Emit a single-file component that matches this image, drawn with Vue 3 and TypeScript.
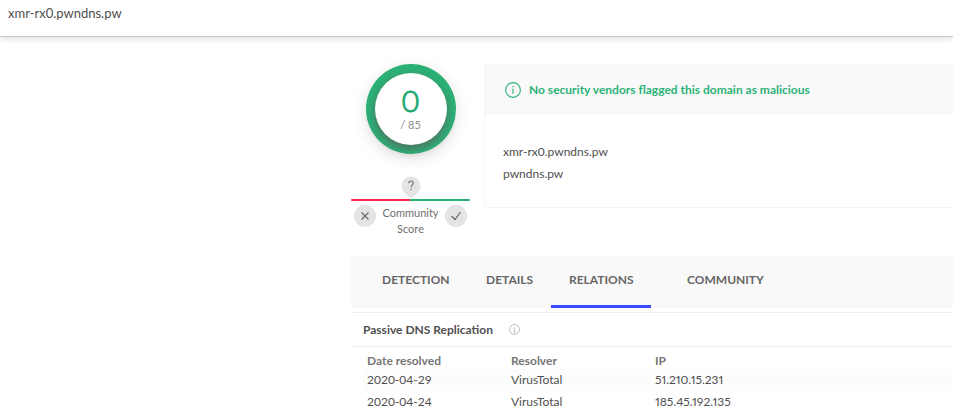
<script setup lang="ts">
interface Resolution {
  date: string
  resolver: string
  ip: string
}

const domain = 'xmr-rx0.pwndns.pw'
const parentDomain = 'pwndns.pw'
const tabs: string[] = ['DETECTION', 'DETAILS', 'RELATIONS', 'COMMUNITY']
const activeTab = 'RELATIONS'
const resolutions: Resolution[] = [
  { date: '2020-04-29', resolver: 'VirusTotal', ip: '51.210.15.231' },
  { date: '2020-04-24', resolver: 'VirusTotal', ip: '185.45.192.135' },
]
</script>

<template>
  <div class="page">
    <header class="topbar">{{ domain }}</header>
    <main class="content">
      <section class="summary">
        <div class="score">
          <div class="gauge">
            <div class="gauge-inner">
              <span class="positives">0</span>
              <span class="total">/ 85</span>
            </div>
          </div>
          <svg class="pin" viewBox="0 0 20 23" aria-hidden="true">
            <path d="M10 .5A9.500 9.500 0 0 1 19.500 10c0 5-4.500 8.500-9.500 12.500C5 18.500.5 15 .5 10A9.500 9.500 0 0 1 10 .5z" fill="#e4e4e4" />
            <path d="M7.700 7.300c.1-1.500 1-2.300 2.300-2.300s2.300.8 2.300 2.100c0 1.800-2.200 1.900-2.200 4.200M10.100 12.700v1.400" fill="none" stroke="#757575" stroke-width="1.200" />
          </svg>
          <div class="scale"></div>
          <div class="votes">
            <button type="button" class="vote" aria-label="Malicious">
              <svg viewBox="0 0 22 22"><path d="M7.500 7.500l7 7M14.500 7.500l-7 7" /></svg>
            </button>
            <span class="caption">Community Score</span>
            <button type="button" class="vote" aria-label="Harmless">
              <svg viewBox="0 0 22 22"><path d="M6.500 11l3.500 3.500 5.500-7.500" /></svg>
            </button>
          </div>
        </div>
        <div class="card">
          <div class="verdict">
            <svg class="info" viewBox="0 0 16 16" aria-hidden="true">
              <circle cx="8" cy="8" r="7.400" />
              <path d="M8 6.500v5.500M8 4v1.200" />
            </svg>
            <span>No security vendors flagged this domain as malicious</span>
          </div>
          <div class="names">
            <a href="#">{{ domain }}</a>
            <a href="#">{{ parentDomain }}</a>
          </div>
        </div>
      </section>

      <nav class="tabs">
        <a
          v-for="tab in tabs"
          :key="tab"
          href="#"
          class="tab"
          :class="{ active: tab === activeTab }"
        >{{ tab }}</a>
      </nav>

      <section class="relations">
        <h2 class="heading">
          Passive DNS Replication
          <svg class="info-small" viewBox="0 0 16 16" aria-hidden="true">
            <circle cx="8" cy="8" r="7.200" />
            <path d="M6.500 7H8v5M6.500 12h3M8 4v1.300" />
          </svg>
        </h2>
        <table class="records">
          <thead>
            <tr>
              <th scope="col">Date resolved</th>
              <th scope="col">Resolver</th>
              <th scope="col">IP</th>
            </tr>
          </thead>
          <tbody>
            <tr v-for="row in resolutions" :key="row.date">
              <td>{{ row.date }}</td>
              <td>{{ row.resolver }}</td>
              <td class="ip">{{ row.ip }}</td>
            </tr>
          </tbody>
        </table>
      </section>
    </main>
  </div>
</template>

<style>
body {
  background: #fff;
}
</style>

<style scoped>
.page {
  font-family: Lato, "Open Sans", sans-serif;
  font-size: 12px;
  line-height: 16px;
  color: #505050;
}
.page * {
  box-sizing: border-box;
}
a {
  color: inherit;
  text-decoration: none;
}
.topbar {
  padding: 5px 8px 15px;
  font-size: 13px;
  border-bottom: 1px solid #c6c6c6;
  box-shadow: 0 2px 6px rgba(0, 0, 0, 0.12);
}
.content {
  margin-left: 351px;
  padding-top: 27px;
}
.summary {
  display: flex;
  align-items: flex-start;
  gap: 14px;
}
.score {
  flex: none;
  width: 119px;
  display: flex;
  flex-direction: column;
  align-items: center;
}
.gauge {
  width: 90px;
  height: 90px;
  padding: 9px;
  border-radius: 50%;
  background: #2bb176;
  box-shadow: 0 4px 16px rgba(0, 0, 0, 0.12);
}
.gauge-inner {
  height: 72px;
  border-radius: 50%;
  background: #fff;
  box-shadow: 0 4px 10px rgba(95, 80, 85, 0.7);
  display: flex;
  flex-direction: column;
  align-items: center;
  padding-top: 9px;
}
.positives {
  font-size: 30px;
  font-weight: 300;
  line-height: 36px;
  color: #22a971;
  -webkit-text-stroke: 1px #22a971;
}
.total {
  font-size: 11px;
  line-height: 14px;
  color: #8d8d8d;
}
.pin {
  width: 20px;
  height: 23px;
  margin-top: 22px;
}
.scale {
  width: 100%;
  height: 2px;
  border-radius: 1px;
  background: linear-gradient(90deg, #ff264f 50%, #28b374 50%);
}
.votes {
  width: 100%;
  display: flex;
  justify-content: space-between;
  padding: 4px 3px 0;
}
.vote {
  flex: none;
  width: 22px;
  height: 22px;
  padding: 0;
  border: 0;
  border-radius: 50%;
  background: #e4e4e4;
}
.vote svg {
  display: block;
  fill: none;
  stroke: #666;
  stroke-width: 1.2;
}
.caption {
  font-size: 11px;
  text-align: center;
  color: #6f6f6f;
}
.card {
  flex: 1;
  border-left: 1px solid #f5f5f5;
  border-bottom: 1px solid #f5f5f5;
}
.verdict {
  display: flex;
  align-items: center;
  gap: 8px;
  height: 51px;
  padding: 0 20px;
  background: #f9f9f9;
  color: #2bb277;
  font-weight: 700;
}
.info {
  width: 16px;
  height: 16px;
  fill: none;
  stroke: #2bb277;
  stroke-width: 1.1;
}
.names {
  display: flex;
  flex-direction: column;
  gap: 6px;
  padding: 29px 18px 25px;
}
.tabs {
  display: grid;
  grid-template-columns: 104px 83px 100px auto;
  justify-content: start;
  margin-top: 19px;
  padding-left: 13px;
  background: #f9f9f9;
}
.tab {
  height: 52px;
  padding: 16px 18px 0;
  font-weight: 700;
  color: #666;
}
.tab:last-child {
  margin-left: 18px;
}
.tab.active {
  border-bottom: 3px solid #3b4bff;
}
.relations {
  margin-top: 4px;
  border-top: 1px solid #eee;
}
.heading {
  display: flex;
  align-items: center;
  gap: 16px;
  height: 34px;
  margin: 0;
  padding-left: 12px;
  border-bottom: 1px solid #eee;
  font-size: 12px;
  font-weight: 700;
}
.info-small {
  width: 11px;
  height: 11px;
  fill: none;
  stroke: #b8b8b8;
  stroke-width: 1.4;
}
.records {
  width: calc(100% - 12px);
  margin: 6px 0 0 12px;
  border-collapse: collapse;
  table-layout: fixed;
  text-align: left;
}
.records th,
.records td {
  padding: 0 4px;
}
.records th:not(:last-child) {
  width: 144px;
}
.records th {
  height: 16px;
  color: #767676;
}
.records td {
  height: 22px;
}
.ip {
  font-variant-numeric: proportional-nums;
}
.records tbody tr:nth-child(odd) {
  background: #fcfcfc;
}
</style>
